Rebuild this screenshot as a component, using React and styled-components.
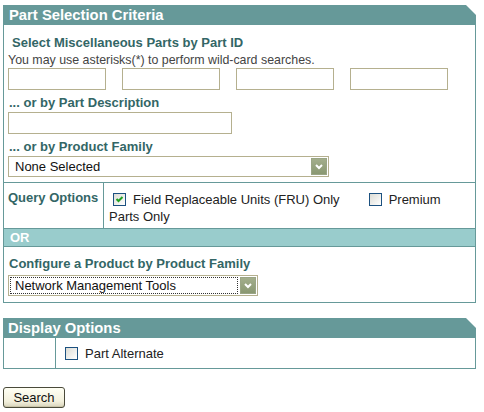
import React from "react";
import styled, { createGlobalStyle } from "styled-components";

const GlobalStyle = createGlobalStyle`
  body {
    margin: 0;
    background: #ffffff;
    font-family: "Liberation Sans", Arial, sans-serif;
    color: #222222;
  }
`;

const Page = styled.div`
  width: 473px;
  padding: 5px 0 0 3px;
`;

const PanelHeader = styled.div`
  height: 20px;
  background-color: #669999;
  color: #ffffff;
  font-weight: 700;
  font-size: 14.8px;
  line-height: 20px;
  padding-left: ${(p) => p.indent || 6}px;
  clip-path: polygon(0 0, calc(100% - 10px) 0, 100% 10px, 100% 100%, 0 100%);
`;

const Box = styled.div`
  border: 1px solid #669999;
  border-top: none;
  box-sizing: border-box;
`;

const Section = styled.div`
  padding: ${(p) => p.pad || "0"};
  border-bottom: ${(p) => (p.divider ? "1px solid #669999" : "none")};
`;

const Title = styled.div`
  font-weight: 700;
  font-size: 13px;
  line-height: 15px;
  color: #336666;
  padding-left: ${(p) => p.indent || 0}px;
  margin-top: ${(p) => p.top || 0}px;
`;

const Hint = styled.div`
  font-size: 12.4px;
  line-height: 14px;
  color: #444444;
  margin-top: 3px;
`;

const InputRow = styled.div`
  display: flex;
  gap: 16px;
  margin-top: 1px;
`;

const TextInput = styled.div`
  width: ${(p) => p.w}px;
  height: 22px;
  box-sizing: border-box;
  border: 1px solid #b5b08f;
  background: #ffffff;
  margin-top: ${(p) => p.top || 0}px;
`;

const SelectBox = styled.div`
  width: ${(p) => p.w}px;
  height: 21px;
  box-sizing: border-box;
  border: 1px solid #b5b08f;
  background: #ffffff;
  display: flex;
  align-items: center;
  padding: 1px;
  margin-top: ${(p) => p.top || 0}px;
`;

const SelectText = styled.div`
  flex: 1;
  height: 17px;
  box-sizing: border-box;
  font-size: 13px;
  line-height: 15px;
  color: #111111;
  padding-left: 4px;
  border: 1px ${(p) => (p.focused ? "dotted #333333" : "solid transparent")};
`;

const ArrowBtn = styled.div`
  width: 16px;
  height: 17px;
  margin-left: 2px;
  background: linear-gradient(#a3ae8c, #8a9872);
  border: 1px solid #9aa585;
  box-sizing: border-box;
  display: flex;
  align-items: center;
  justify-content: center;
`;

const OptionRow = styled.div`
  display: flex;
  border-bottom: ${(p) => (p.last ? "none" : "1px solid #669999")};
`;

const LabelCell = styled.div`
  width: ${(p) => p.w}px;
  box-sizing: border-box;
  border-right: 1px solid #669999;
  padding: 7px 0 0 4px;
  font-weight: 700;
  font-size: 13px;
  color: #336666;
  line-height: 16px;
`;

const OptionCell = styled.div`
  flex: 1;
  padding: ${(p) => p.pad || "8px 20px 3px 5px"};
  font-size: 13px;
  line-height: 17px;
  color: #222222;
`;

const Check = styled.span`
  display: inline-block;
  vertical-align: -2px;
  width: 13px;
  height: 13px;
  box-sizing: border-box;
  border: 1px solid #1c5180;
  background: linear-gradient(135deg, #dcdcd5, #ffffff);
  margin: ${(p) => p.m || "0 7px 0 4px"};
  position: relative;
`;

const OrBar = styled.div`
  height: 17px;
  background-color: #99cccc;
  color: #ffffff;
  font-weight: 700;
  font-size: 13px;
  line-height: 17px;
  padding-left: 6px;
  border-bottom: 1px solid #669999;
`;

const Spacer = styled.div`
  height: ${(p) => p.h}px;
`;

const SearchButton = styled.button`
  display: block;
  width: 62px;
  height: 21px;
  padding: 0;
  font-family: "Liberation Sans", Arial, sans-serif;
  font-size: 13px;
  color: #111111;
  border: 1px solid #4a4a3a;
  border-radius: 3px;
  background: linear-gradient(#fffff4, #f3f0dc 70%, #d8d4bc);
  box-shadow: inset 0 -1px 0 #c9c4a8;
`;

const Chevron = () => (
  <svg width="10" height="10" viewBox="0 0 10 10">
    <path d="M2 3 L5 6 L8 3" stroke="#ffffff" strokeWidth="2" fill="none" />
  </svg>
);

const Tick = () => (
  <svg width="11" height="11" viewBox="0 0 11 11" style={{ position: "absolute", left: 0, top: 0 }}>
    <path d="M2.5 5 L4.5 7 L8.5 3" stroke="#21a121" strokeWidth="2" fill="none" />
  </svg>
);

const Select = ({ w, top, value, focused }) => (
  <SelectBox w={w} top={top}>
    <SelectText focused={focused}>{value}</SelectText>
    <ArrowBtn>
      <Chevron />
    </ArrowBtn>
  </SelectBox>
);

export default function App() {
  return (
    <Page>
      <GlobalStyle />
      <PanelHeader>Part Selection Criteria</PanelHeader>
      <Box>
        <Section pad="10px 0 5px 4px" divider>
          <Title indent={4}>Select Miscellaneous Parts by Part ID</Title>
          <Hint>You may use asterisks(*) to perform wild-card searches.</Hint>
          <InputRow>
            <TextInput w={98} />
            <TextInput w={98} />
            <TextInput w={98} />
            <TextInput w={98} />
          </InputRow>
          <Title indent={1} top={5}>... or by Part Description</Title>
          <TextInput w={224} top={2} />
          <Title indent={1} top={5}>... or by Product Family</Title>
          <Select w={321} top={2} value="None Selected" />
        </Section>
        <OptionRow>
          <LabelCell w={100}>Query Options</LabelCell>
          <OptionCell>
            <Check>
              <Tick />
            </Check>
            Field Replaceable Units (FRU) Only
            <Check m="0 7px 0 29px" />
            Premium Parts Only
          </OptionCell>
        </OptionRow>
        <OrBar>OR</OrBar>
        <Section pad="9px 0 6px 4px">
          <Title indent={1}>Configure a Product by Product Family</Title>
          <Select w={250} top={4} value="Network Management Tools" focused />
        </Section>
      </Box>
      <Spacer h={15} />
      <PanelHeader indent={5}>Display Options</PanelHeader>
      <Box>
        <OptionRow last>
          <LabelCell w={52} />
          <OptionCell pad="7px 0 6px 5px">
            <Check m="0 7px 0 4px" />
            Part Alternate
          </OptionCell>
        </OptionRow>
      </Box>
      <Spacer h={18} />
      <SearchButton>Search</SearchButton>
    </Page>
  );
}
